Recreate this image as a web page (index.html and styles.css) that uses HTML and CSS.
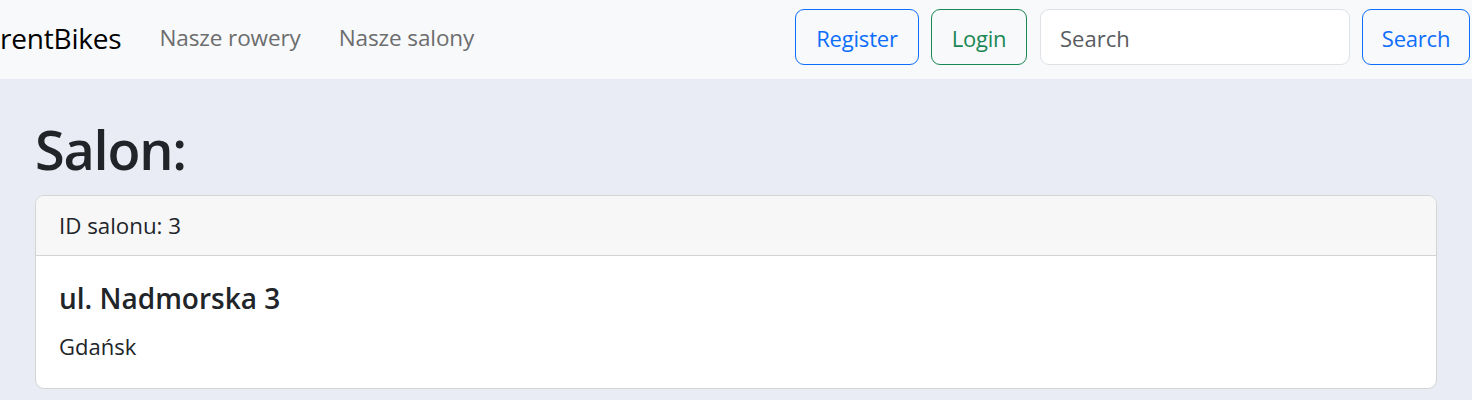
FILE: index.html
```html
<!DOCTYPE html>
<html lang="pl">
<head>
<meta charset="utf-8">
<title>rentBikes - Salon</title>
<link rel="stylesheet" href="styles.css">
</head>
<body>
<nav class="navbar">
  <div class="nav-left">
    <a class="brand" href="#">rentBikes</a>
    <a class="nav-link" href="#">Nasze rowery</a>
    <a class="nav-link" href="#">Nasze salony</a>
  </div>
  <div class="nav-right">
    <a class="btn btn-primary btn-register" href="#">Register</a>
    <a class="btn btn-success btn-login" href="#">Login</a>
    <form class="search-form">
      <input class="search-input" type="search" placeholder="Search">
      <button class="btn btn-primary btn-search" type="button">Search</button>
    </form>
  </div>
</nav>
<main class="container">
  <h1 class="title">Salon:</h1>
  <div class="card">
    <div class="card-header">ID salonu: 3</div>
    <div class="card-body">
      <h5 class="card-title">ul. Nadmorska 3</h5>
      <p class="card-text">Gdańsk</p>
    </div>
  </div>
</main>
</body>
</html>
```
FILE: styles.css
```css
* { box-sizing: border-box; }
html, body { margin: 0; padding: 0; }
body {
  background: #e9ecf4;
  font-family: "Open Sans", "Noto Sans", "Liberation Sans", sans-serif;
  font-size: 24px;
  line-height: 1.5;
  color: #212529;
  overflow: hidden;
}
a { text-decoration: none; }

.navbar {
  height: 79px;
  background: #f8f9fa;
  display: flex;
  justify-content: space-between;
  align-items: flex-start;
  padding: 9px 2px 0 0;
}
.nav-left {
  display: flex;
  align-items: center;
  height: 56px;
  gap: 38px;
  padding-top: 2px;
}
.brand {
  font-size: 28px;
  color: #000;
  letter-spacing: -0.2px;
}
.nav-link {
  color: #6c6d6e;
  font-size: 22.5px;
  letter-spacing: -0.1px;
}

.nav-right {
  display: flex;
  align-items: center;
  gap: 12px;
}
.btn {
  display: flex;
  align-items: center;
  justify-content: center;
  height: 56px;
  border: 1px solid;
  border-radius: 9px;
  background: transparent;
  font-family: inherit;
  font-size: 22px;
  letter-spacing: -0.2px;
  padding: 2px 0 0 0;
}
.btn-primary { color: #0d6efd; border-color: #0d6efd; }
.btn-success { color: #198754; border-color: #198754; }
.btn-register { width: 124px; margin-left: 1px; }
.btn-login { width: 96px; }
.btn-search { width: 108px; }
.search-form {
  display: flex;
  gap: 12px;
  margin-left: 1px;
}
.search-input {
  width: 310px;
  height: 56px;
  border: 1px solid #dee2e6;
  border-radius: 9px;
  background: #fff;
  padding: 2px 19px 0 19px;
  font-family: inherit;
  font-size: 22px;
  color: #212529;
}
.search-input::placeholder { color: #595c5f; opacity: 1; }

.container {
  padding: 34px 35px 0 35px;
}
.title {
  margin: 0 0 10px 0;
  font-size: 54px;
  line-height: 72px;
  font-weight: 600;
  letter-spacing: -1.2px;
  color: #212529;
}
.card {
  background: #fff;
  border: 1px solid #d3d4d5;
  border-radius: 9px;
  overflow: hidden;
}
.card-header {
  background: #f7f7f7;
  border-bottom: 1px solid #d3d4d5;
  padding: 12px 23px;
  height: 60px;
  line-height: 35px;
  font-size: 22.3px;
}
.card-body {
  padding: 24px 23px;
}
.card-title {
  margin: 0 0 12px 0;
  font-size: 28px;
  line-height: 36px;
  font-weight: 600;
}
.card-text {
  margin: 0;
  font-size: 22px;
  line-height: 36px;
}
```
